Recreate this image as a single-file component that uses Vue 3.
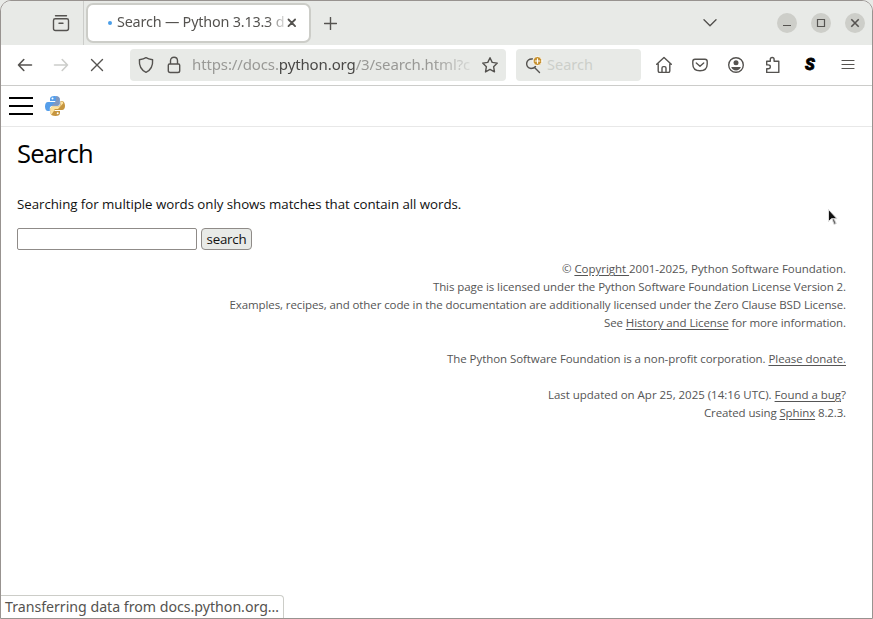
<script setup>
const licenseLines = [
  { before: '© ', link: 'Copyright ', after: '2001-2025, Python Software Foundation.', cls: 'l1' },
  { before: 'This page is licensed under the Python Software Foundation License Version 2.', cls: 'l2' },
  { before: 'Examples, recipes, and other code in the documentation are additionally licensed under the Zero Clause BSD License.', cls: 'l3' },
  { before: 'See ', link: 'History and License', after: ' for more information.', cls: 'l4' },
  { before: '' },
  { before: 'The Python Software Foundation is a non-profit corporation. ', link: 'Please donate.', cls: 'l5' },
  { before: '' },
  { before: 'Last updated on Apr 25, 2025 (14:16 UTC). ', link: 'Found a bug', after: '?', cls: 'l6' },
  { before: 'Created using ', link: 'Sphinx', after: ' 8.2.3.', cls: 'l7' },
]
</script>

<template>
  <div class="window">
    <div class="tabs">
      <div class="firefox-view">
        <svg class="ic" width="18" height="18" viewBox="0 0 18 18"><path d="M3.5 1.8h11M3.2 4.8h11.6q1.7 0 1.7 1.7v8q0 2-2 2h-11q-2 0-2-2v-8q0-1.7 1.7-1.7zM7 9.2h4" /></svg>
      </div>
      <div class="tab">
        <i class="dot"></i>
        <span class="tab-title">Search — Python 3.13.3 d</span>
        <svg class="ic close" width="10" height="10" viewBox="0 0 10 10"><path d="M1.5 1.5l6.600 6.600M8.100 1.5L1.5 8.100" /></svg>
      </div>
      <svg class="ic plus" width="13" height="13" viewBox="0 0 13 13"><path d="M6.5.5v12M.5 6.5h12" /></svg>
      <svg class="ic chevron" width="14" height="8" viewBox="0 0 14 8"><path d="M1 .8l6 6 6-6" /></svg>
      <div class="controls">
        <span class="control"><svg class="ic" width="20" height="20"><path d="M6 12.5h8" /></svg></span>
        <span class="control"><svg class="ic" width="20" height="20"><path d="M6.5 6.5h7v7h-7z" /></svg></span>
        <span class="control"><svg class="ic thick" width="20" height="20"><path d="M6.3 6.3l7.4 7.4M13.7 6.3l-7.4 7.4" /></svg></span>
      </div>
    </div>

    <div class="toolbar">
      <div class="nav">
        <svg class="ic arrow" width="16" height="14" viewBox="0 0 16 14"><path d="M6.800 1.500L1.500 7l5.300 5.500M1.500 7h13" /></svg>
        <svg class="ic arrow off" width="16" height="14" viewBox="0 0 16 14"><path d="M9.200 1.500L14.500 7l-5.300 5.500M14.500 7h-13" /></svg>
        <svg class="ic stop" width="14" height="14" viewBox="0 0 14 14"><path d="M1.500 1.500l11 11M12.500 1.500l-11 11" /></svg>
      </div>
      <div class="urlbar">
        <svg class="ic" width="16" height="18" viewBox="0 0 16 18"><path d="M8 1.6c2 1.3 4.2 1.8 6.6 2.2C15 9.3 13 14 8 16.4 3 14 1 9.3 1.4 3.800c2.400-.4 4.600-.9 6.600-2.200z" /></svg>
        <svg class="ic lock" width="14" height="18" viewBox="0 0 14 18"><path d="M3.500 8V4.700C3.500 0 10.500 0 10.500 4.700V8M2.500 8h9q1.200 0 1.200 1.200v5.500q0 1.800-1.800 1.800H3.100q-1.800 0-1.800-1.800V9.200Q1.300 8 2.500 8z" /></svg>
        <div class="url">https://docs.<b>python.org</b>/3/search.html?c</div>
        <svg class="ic" width="18" height="18" viewBox="0 0 18 18"><path d="M9 1.700l2.200 4.700 5.100.7-3.700 3.600.9 5.200L9 13.400l-4.500 2.500.9-5.200L1.700 7.100l5.100-.7z" /></svg>
      </div>
      <div class="searchbar">
        <svg class="ic" width="18" height="18" viewBox="0 0 18 18"><path d="M7.500 3C.5 2-.5 12 6 12.500c2 0 3.500-.8 4.500-2M9.500 11.500l5 5" /><circle class="badge" cx="12.500" cy="5" r="4.500" /><path class="white" d="M12.500 2.800v4.400M10.300 5h4.400" /></svg>
        <span>Search</span>
      </div>
      <div class="actions">
        <svg class="ic" width="18" height="18" viewBox="0 0 18 18"><path d="M1.700 8.200L9 1.500l7.300 6.700M3.200 8v6.900q0 1.500 1.500 1.500h8.600q1.500 0 1.500-1.500V8M7 16v-4q0-1.400 1.400-1.400h1.200q1.400 0 1.400 1.400v4" /></svg>
        <svg class="ic" width="18" height="18" viewBox="0 0 18 18"><path d="M4 3.300h10q2.200 0 2.200 2.200V8q0 6.700-7.200 6.700T1.800 8V5.500q0-2.200 2.200-2.200zM5.300 7L9 10.300 12.700 7" /></svg>
        <svg class="ic" width="18" height="18" viewBox="0 0 18 18"><circle cx="9" cy="9" r="7.300" /><circle class="solid" cx="9" cy="6.800" r="2.500" /><path class="solid" d="M4.200 11h9.600c-.8 2.200-2.500 3.400-4.800 3.400S5 13.200 4.200 11z" /></svg>
        <svg class="ic" width="18" height="18" viewBox="0 0 18 18"><path d="M2.700 5.200h3.600V3.500q0-2 1.900-2t1.900 2v1.700h4.700v11.200H2.700v-3.700h1.600q2 0 2-1.900t-2-1.900H2.700z" /></svg>
        <span class="s-icon">S</span>
        <svg class="ic menu" width="14" height="12" viewBox="0 0 14 12"><path d="M1 1.500h12M1 5.500h12M1 9.500h12" /></svg>
      </div>
    </div>

    <header class="page-head">
      <svg class="burger" width="24" height="20" viewBox="0 0 24 20"><path d="M0 2h24M0 10h24M0 18h24" /></svg>
      <svg class="logo" width="22" height="22" viewBox="0 0 22 22">
        <path class="blue" d="M10.500 1C7.500 1 6 2 6 4v2h5.500v1H4C2 7 1 9 1 11.500S2 16 4 16h1.800v-2.500c0-1.800 1.200-2.800 3-2.800h4.500c1.500 0 2.400-1 2.400-2.500V4c0-2-2-3-5.200-3z" />
        <path class="shade" d="M12 1.200c2.500.2 3.700 1.200 3.700 2.800v4.200c0 1.500-.9 2.500-2.400 2.500H8.800c-1 0-1.700.3-2.200.8L12 6z" />
        <path class="gold" d="M11.500 21c3 0 4.500-1 4.500-3v-2h-5.500v-1H18c2 0 3-2 3-4s-1-5-3-5h-1.500v2.500c0 1.800-1.200 2.900-3 2.900H9c-1.500 0-2.500 1-2.500 2.600v4c0 2 1.800 3 5 3z" />
        <path class="cream" d="M8.500 11.500h5.500q3 0 3-3V6.500h1.500L19.500 8 14 14H10.500v1L7.500 19.500c-.8-.5-1-1-1-1.500v-4c0-1.200.8-2.200 2-2.500z" />
        <circle class="eye" cx="8.500" cy="3.500" r="1" /><circle class="eye" cx="13.700" cy="18.300" r="1" />
      </svg>
    </header>

    <main>
      <h1>Search</h1>
      <p class="hint">Searching for multiple words only shows matches that contain all words.</p>
      <form @submit.prevent>
        <input type="text" /><button>search</button>
      </form>
    </main>

    <footer>
      <div v-for="(line, i) in licenseLines" :key="i"><span :class="line.cls">{{ line.before }}<a v-if="line.link">{{ line.link }}</a>{{ line.after }}</span></div>
    </footer>

    <div class="status"><span>Transferring data from docs.python.org…</span></div>

    <svg class="pointer" width="13" height="20" viewBox="0 0 13 20"><path class="arrow-tail" d="M5 11l2 5.500 2.300-.9L7 10.500z" /><path class="arrow-head" d="M1.500 1.500v12l3-2.800h5.500z" /></svg>
  </div>
</template>

<style>
body { margin: 0; background: #e8eae7; }
</style>

<style scoped>
* { box-sizing: border-box; }
.window {
  position: relative; width: 873px; height: 619px; overflow: hidden;
  display: flex; flex-direction: column; background: #fff;
  border: 1px solid #989390; border-radius: 11px 11px 0 0;
  font-family: "Open Sans", "Noto Sans", sans-serif;
}
svg { display: block; flex: none; }
.ic { fill: none; stroke: #555350; stroke-width: 1.4; stroke-linecap: round; stroke-linejoin: round; }
.tabs { height: 44px; flex: none; background: #e8eae7; display: flex; align-items: center; }
.firefox-view { width: 83px; height: 44px; border-right: 1px solid #cccdca; display: flex; align-items: center; padding-left: 51px; }
.tab {
  width: 225px; height: 40px; margin: 0 0 1px 2px; padding-left: 20px; background: #fff;
  border: 2px solid #cccdc8; border-radius: 7px; display: flex; align-items: center;
}
.dot { width: 4px; height: 4px; margin-right: 5px; border-radius: 50%; background: #4a9ee8; flex: none; }
.tab-title {
  width: 169px; margin-bottom: 2px; white-space: nowrap; color: #555350;
  font: 14.400px/20px "Noto Sans", sans-serif; letter-spacing: -0.2px;
  -webkit-mask-image: linear-gradient(90deg, #000 150px, transparent 172px);
}
.close { margin-left: 1px; stroke-width: 1.800; }
.plus { margin-left: 13px; }
.chevron { margin-left: 366px; }
.controls { display: flex; gap: 14px; margin-left: 60px; }
.control { width: 20px; height: 20px; border-radius: 50%; background: #cdcec9; }
.control .ic { stroke-linecap: butt; stroke-linejoin: miter; stroke-width: 1.2; }
.control .thick { stroke-width: 1.600; }

.toolbar { height: 41px; flex: none; border-bottom: 1px solid #ccccca; display: flex; align-items: center; }
.nav { width: 129px; padding-left: 16px; display: flex; align-items: center; gap: 20px; }
.arrow { stroke-width: 1.600; }
.stop { margin-left: 1px; }
.off { stroke: #cccdca; }
.urlbar { width: 376px; height: 32px; background: #e8eae7; border-radius: 4px; display: flex; align-items: center; padding-left: 8px; }
.lock { margin-left: 13px; }
.url {
  width: 278px; margin: 0 11px 2px; white-space: nowrap; color: #999996;
  font: 15px/22px "Noto Sans", sans-serif; letter-spacing: -0.12px;
  -webkit-mask-image: linear-gradient(90deg, #000 240px, rgba(0,0,0,.2) 278px);
}
.url b { font-weight: 400; color: #4a4947; }
.searchbar { width: 125px; height: 32px; margin-left: 10px; padding-left: 9px; background: #e8eae7; border-radius: 4px; display: flex; align-items: center; gap: 4px; }
.searchbar span { margin-bottom: 2px; font: 14.500px/20px "Noto Sans", sans-serif; color: #cccfca; }
.badge { fill: #c6912f; stroke: #fff; stroke-width: 1; }
.white { stroke: #fff; stroke-width: 1.200; }
.actions { display: flex; align-items: center; margin-left: 14px; gap: 18.200px; }
.solid { fill: #555350; stroke: none; }
.s-icon { width: 18px; text-align: center; font: italic 900 16px/20px Roboto, sans-serif; color: #000; -webkit-text-stroke: .8px #000; position: relative; left: 1px; }
.menu { stroke-width: 1.200; margin-left: 5px; }

.page-head { height: 41px; flex: none; border-bottom: 1px solid #e8e8e8; display: flex; align-items: center; padding-left: 8px; }
.burger { stroke: #000; stroke-width: 2; }
.logo { margin-left: 11px; }
.blue { fill: #559eea; }
.shade { fill: #8098bf; }
.gold { fill: #c6953f; }
.cream { fill: #fce3a0; }
.eye { fill: #fff; }

main { padding: 9px 16px 0; color: #111; }
h1 { margin: 0; font-size: 25.500px; line-height: 34px; font-weight: 400; color: #000; letter-spacing: -0.8px; }
.hint { margin: 25px 0 0; font-size: 13.300px; line-height: 18px; white-space: nowrap; letter-spacing: -.045px; }
form { display: flex; gap: 4px; margin-top: 15px; }
input { width: 180px; height: 22px; border: 1px solid #8f8b88; border-radius: 2px; background: #fff; padding: 0; }
button { width: 51px; height: 22px; border: 1px solid #8f8b88; border-radius: 4px; background: #e8eae7; padding: 0; font: 13.300px/18px "Open Sans", sans-serif; letter-spacing: -.2px; color: #111; }

footer { margin-top: 10px; padding-right: 26px; text-align: right; font-size: 11.500px; line-height: 18px; color: #555; white-space: nowrap; }
footer div { height: 18px; }
footer a { text-decoration: underline; text-underline-offset: 1.500px; white-space: pre; }
footer span { white-space: pre; }
.l1 { letter-spacing: -.03px; }
.l2 { letter-spacing: -.083px; }
.l3 { letter-spacing: -.097px; }
.l4 { letter-spacing: -.1px; }
.l5 { letter-spacing: -.073px; }
.l6 { letter-spacing: -.02px; }
.l7 { letter-spacing: -.12px; }
.status {
  position: absolute; left: 0; bottom: 0; width: 283px; height: 23px; padding-left: 4px; background: #fff;
  border: 1px solid #cccdc8; border-left: 0; border-bottom: 0; border-radius: 0 4px 0 0;
  font: 14.200px/21px "Noto Sans", sans-serif; letter-spacing: -.02px; color: #555350; white-space: nowrap;
}
.pointer { position: absolute; left: 826px; top: 207px; stroke: #ddd; stroke-width: 1; }
.arrow-head { fill: #111; }
.arrow-tail { fill: #666; }
</style>
